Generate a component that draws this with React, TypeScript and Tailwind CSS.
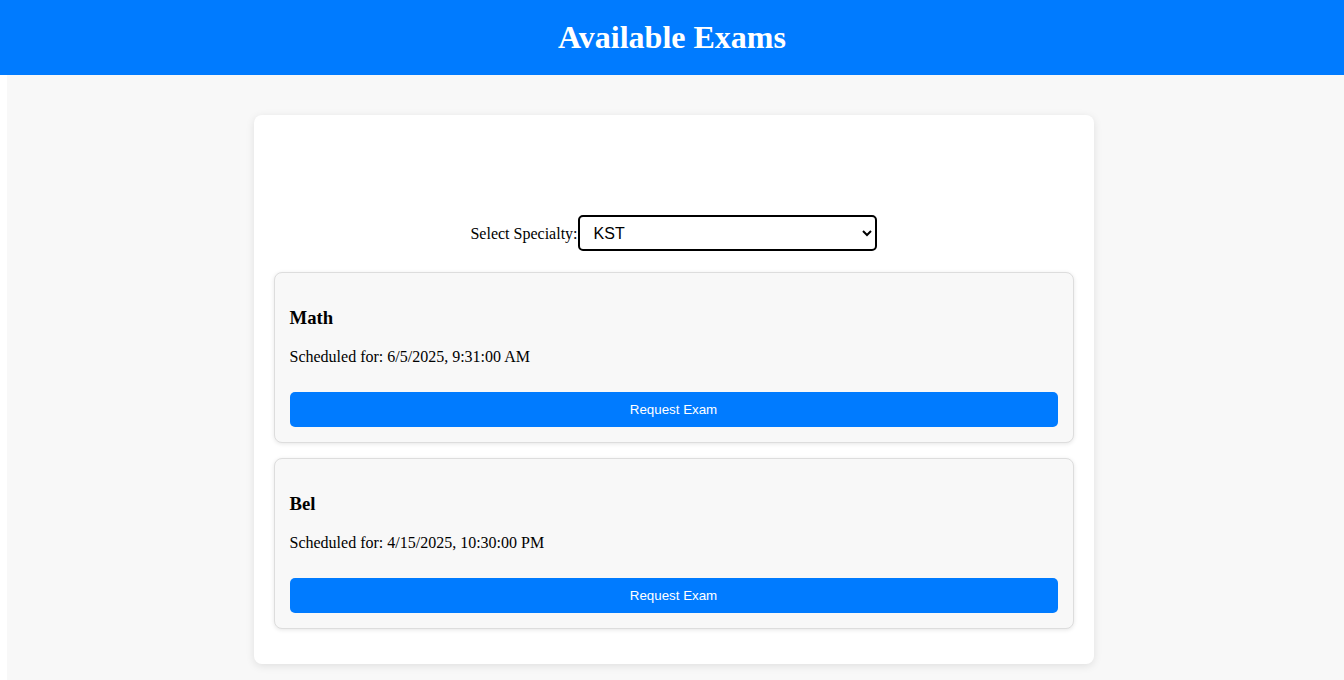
import { useState } from "react";

const exams = [
  { id: 1, name: "Math", date: "6/5/2025, 9:31:00 AM" },
  { id: 2, name: "Bel", date: "4/15/2025, 10:30:00 PM" },
];

export default function App() {
  const [specialty, setSpecialty] = useState("KST");

  return (
    <div className="min-h-[680px] bg-white font-['Liberation_Serif',serif] text-black">
      <header className="h-[75px] bg-[#007bff] flex items-center justify-center pb-[2px]">
        <h1 className="text-[32px] font-bold text-white leading-none">Available Exams</h1>
      </header>

      <main className="ml-[7px] pr-[4px] bg-[#f8f8f8] pt-10 pb-4 min-h-[605px] flex justify-center items-start">
        <div className="w-[840px] bg-white rounded-lg shadow-[0_2px_8px_rgba(0,0,0,0.1)] px-5 pt-5 pb-5">
          {/* empty heading space */}
          <div className="h-[80px]" />

          <div className="flex items-center justify-center mb-[21px]">
            <label className="text-base pt-[1px]">Select Specialty:</label>
            <select
              value={specialty}
              onChange={(e) => setSpecialty(e.target.value)}
              className="w-[299px] h-[36px] border-2 border-black rounded-[5px] pl-[10px] pr-2 font-['Liberation_Sans',sans-serif] text-base bg-white"
            >
              <option value="KST">KST</option>
              <option value="SIT">SIT</option>
            </select>
          </div>

          {exams.map((exam) => (
            <div
              key={exam.id}
              className="mb-[15px] bg-[#f8f8f8] border border-[#ddd] rounded-lg p-[15px] shadow-[0_1px_4px_rgba(0,0,0,0.1)]"
            >
              <h3 className="text-[18.72px] font-bold mt-[18.72px] mb-[19.4px] leading-[21.5px]">{exam.name}</h3>
              <p className="mt-4 mb-4 text-base leading-[18.4px]">Scheduled for: {exam.date}</p>
              <button className="mt-[10px] w-full h-[35px] bg-[#007bff] text-white rounded-[5px] font-['Liberation_Sans',sans-serif] text-[13.33px]">
                Request Exam
              </button>
            </div>
          ))}
        </div>
      </main>
    </div>
  );
}
